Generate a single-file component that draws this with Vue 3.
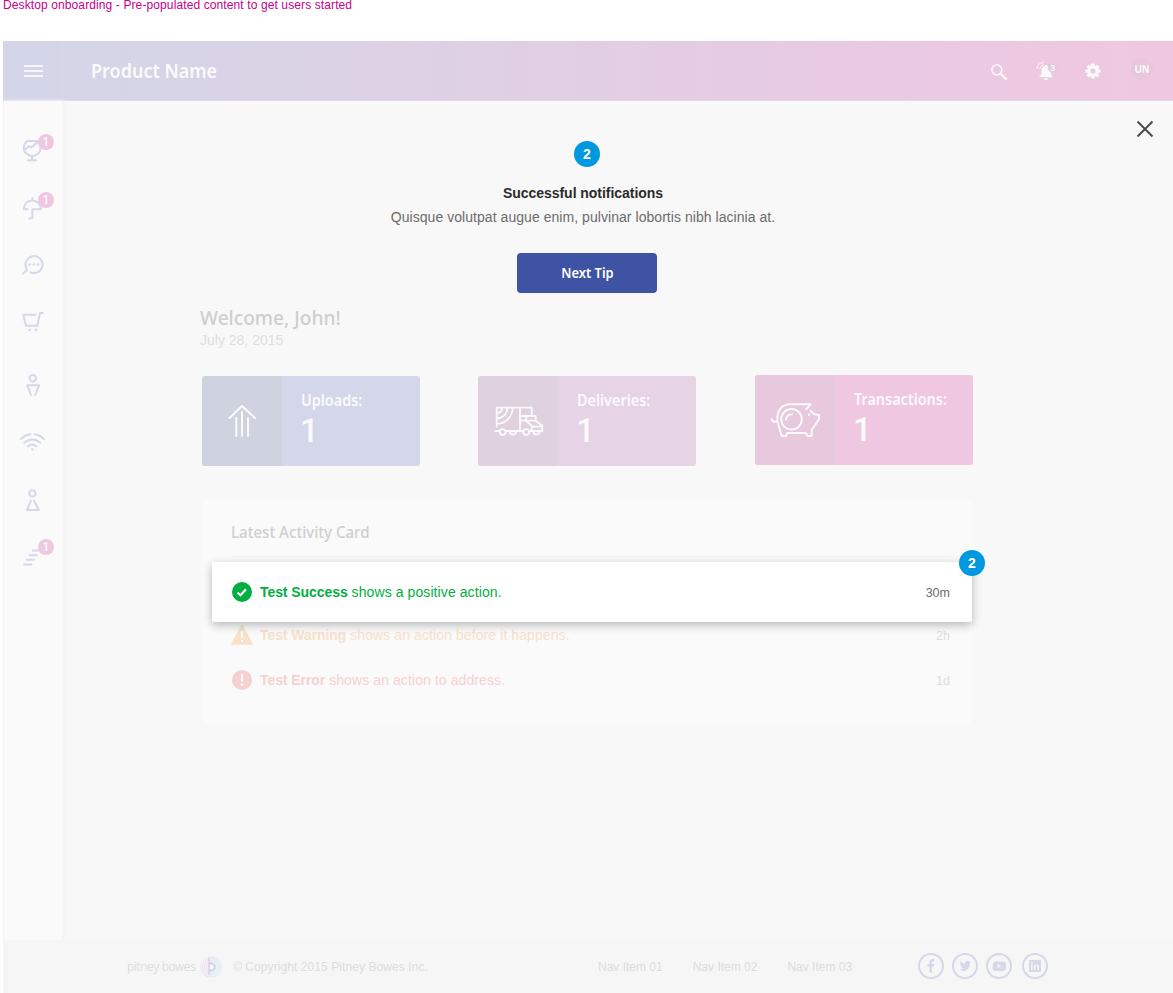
<script setup>
const navItems = [
  { id: 'reports', badge: 1, d: 'M38.500 21H27.500C22.500 24.500 22.700 31 27 34A8.300 8.300 0 0 0 40.500 26.500M32 36V40M28 40.300H36M25.500 29L29 26L31.500 27.500L38.500 21' },
  { id: 'insurance', badge: 1, d: 'M27.500 31.300H23.700C23.700 26 27.500 22.500 32.300 22.500S41 26 41 31.300H32.300V40.300H29M32.300 22.500V20' },
  { id: 'search', d: 'M30.500 36.300A8.500 8.500 0 1 0 26.500 32.500L27 34L23 37.500', dots: [[29.5, 28.5], [33.8, 28.5], [38, 28.5]] },
  { id: 'cart', d: 'M35.500 20.800H23.300L26 31.700H37.300L40 19H42.700', dots: [[29.500, 36], [36, 36]] },
  { id: 'person', d: 'M31 43L27.300 33.300H39L35.300 43', head: [32.800, 26.300] },
  { id: 'wifi', d: 'M20.800 29Q25 25 30.300 24.300M34.500 24.300Q40 25 43.800 29M24.300 32.700Q32.300 26 40.300 32.700M28 36.300Q32.300 32.700 36.600 36.300', dots: [[32.300, 39.500]] },
  { id: 'customer', d: 'M30.800 33L27 42H38.700L34.300 33', head: [32.400, 25.400] },
  { id: 'steps', badge: 1, d: 'M32.700 24.500H39M29.800 29.200H37M27 33.700H34M24 38.400H31.500' }
]
const stats = [
  { id: 'uploads', label: 'Uploads:', value: 1 },
  { id: 'deliveries', label: 'Deliveries:', value: 1 },
  { id: 'transactions', label: 'Transactions:', value: 1 }
]
const links = ['Nav Item 01', 'Nav Item 02', 'Nav Item 03']
const rings = [3, 4.800, 6.600, 8.400, 10.200]
</script>

<template>
  <div class="page">
    <div class="caption">Desktop onboarding - Pre-populated content to get users started</div>
    <div class="app">
      <header class="topbar">
        <div class="burger"><i></i><i></i><i></i></div>
        <div class="product">Product Name</div>
        <div class="tools">
          <svg class="line" width="18" height="18" viewBox="0 0 18 18"><circle cx="6.800" cy="6.800" r="5" /><path d="M10.500 10.500L16.500 16.500" stroke-width="2.200" /></svg>
          <svg class="bell" width="22" height="20" viewBox="0 0 22 20">
            <path d="M3.500 16.300H16.500V15.200L14.800 13.200V9.500C14.800 6.800 13 5.200 11.200 4.900V4H9V4.900C7 5.300 5.500 6.800 5.500 9.500V13.200L3.500 15.200ZM8 17.200A2 2 0 0 0 12 17.200Z" fill="#fafafa" />
            <path d="M1 7.500Q1.500 2 7.500 1.500M3.500 8Q4 4.800 7.800 3.900" fill="none" stroke="#fafafa" />
            <circle cx="16.500" cy="6.500" r="4.800" fill="#e7c8dd" />
            <text x="16.600" y="9.800" text-anchor="middle">3</text>
          </svg>
          <svg class="gear" width="16" height="16" viewBox="-8 -8 16 16">
            <g fill="#fafafa"><rect v-for="n in 4" :key="n" x="-1.700" y="-7.500" width="3.400" height="15" rx=".4" :transform="`rotate(${n * 45})`" /></g>
            <circle r="4.200" fill="none" stroke="#fafafa" stroke-width="3" /><circle r="2.600" fill="#edc8e0" />
          </svg>
          <div class="avatar">UN</div>
        </div>
      </header>

      <div class="body">
        <nav class="sidebar">
          <div v-for="item in navItems" :key="item.id" class="nav-item">
            <svg width="60" height="58" viewBox="3 0 60 58">
              <path :d="item.d" />
              <circle v-for="(p, i) in item.dots" :key="i" class="dot" :cx="p[0]" :cy="p[1]" r="1.300" />
              <circle v-if="item.head" :cx="item.head[0]" :cy="item.head[1]" r="3.200" />
            </svg>
            <span v-if="item.badge" class="nav-badge" :class="item.id">{{ item.badge }}</span>
          </div>
        </nav>

        <main class="main">
          <svg class="close" width="18" height="18" viewBox="0 0 18 18"><path d="M1.500 1.500L16.500 16.500M16.500 1.500L1.500 16.500" /></svg>
          <section class="tip">
            <div class="step">2</div>
            <h3>Successful notifications</h3>
            <p>Quisque volutpat augue enim, pulvinar lobortis nibh lacinia at.</p>
            <button><span>Next Tip</span></button>
          </section>

          <div class="content">
            <h1>Welcome, John!</h1>
            <div class="date">July 28, 2015</div>
            <div class="stats">
              <div v-for="s in stats" :key="s.id" class="stat" :class="s.id">
                <div class="pict">
                  <svg v-if="s.id === 'uploads'" width="80" height="90" viewBox="0 0 80 90"><path d="M27.500 42L40 30L53 42M40 36V60M34.300 42V60M46 42V60" /></svg>
                  <svg v-else-if="s.id === 'deliveries'" class="truck" width="80" height="90" viewBox="0 0 80 90">
                    <path d="M18.700 50.500V31.700H53.700V40M42 31.700V55M17 55H21.500M28 55H45M51 55H64.300V49.700L57.700 44.700V40H42M42 44.700H57.700M48 40V44.700L53.700 49.700V55M53.700 50.700H64M24.200 31.700A5.500 5.500 0 0 1 18.700 37.200M29.400 31.700A10.700 10.700 0 0 1 18.700 42.400M34.700 31.700A16 16 0 0 1 18.700 47.700M32 55.500A3 3 0 0 0 38 55.500M55.400 55.500A3 3 0 0 0 61.400 55.500" />
                    <circle cx="24.700" cy="56" r="2.900" /><circle cx="48.200" cy="56" r="2.900" />
                  </svg>
                  <svg v-else width="80" height="90" viewBox="0 0 80 90">
                    <path d="M16.700 44Q17 47.300 20 46.500H22.300C21.500 35 27 29.300 35.500 29.300H55.500L51 34.300M55.700 35.700C57 37.500 58.500 39.300 60.500 39.500L64 40V44.300L56.700 55V61H52.700L50.700 58H32.300L31 61H26.700L22.300 46" />
                    <circle cx="36.500" cy="44.300" r="10.300" /><path d="M31 44.500Q31.500 39.500 37 39.300" /><circle class="eye" cx="54" cy="39.800" r="1.200" />
                  </svg>
                </div>
                <div class="figures"><span class="label">{{ s.label }}</span><span class="value">{{ s.value }}</span></div>
              </div>
            </div>

            <section class="activity">
              <h2><span>Latest Activity Card</span></h2>
              <div class="row success">
                <svg width="22" height="22" viewBox="0 0 22 22"><circle cx="11" cy="11" r="10" /><path d="M6.500 11.500L9.500 14.300L15 8.300" class="mark" /></svg>
                <div class="msg"><b>Test Success</b> shows a positive action.</div><time>30m</time>
                <span class="step pin">2</span>
              </div>
              <div class="row warning">
                <svg width="22" height="22" viewBox="0 0 22 22"><path d="M11 .8Q11.600 .8 12 1.600L21.800 19.500Q22 20.700 21 20.700H1Q0 20.700 .2 19.500L10 1.600Q10.400 .8 11 .8Z" /><path d="M11 7V14M11 16V18" class="bang" /></svg>
                <div class="msg"><b>Test Warning</b> shows an action before it happens.</div><time>2h</time>
              </div>
              <div class="row error">
                <svg width="22" height="22" viewBox="0 0 22 22"><circle cx="11" cy="11" r="10" /><path d="M11 5V12.500M11 14.500V17" class="bang" /></svg>
                <div class="msg"><b>Test Error</b> shows an action to address.</div><time>1d</time>
              </div>
            </section>
          </div>
        </main>
      </div>

      <footer class="footer">
        <span class="brand">pitney bowes</span>
        <svg class="logo" width="24" height="24" viewBox="0 0 24 24">
          <defs><linearGradient id="ring" gradientUnits="userSpaceOnUse" x1="3" y1="3" x2="20" y2="20"><stop offset=".15" stop-color="#f2e0eb" /><stop offset=".5" stop-color="#e4e0f1" /><stop offset=".85" stop-color="#d3edf5" /></linearGradient></defs>
          <circle v-for="r in rings" :key="r" cx="12" cy="12" :r="r" fill="none" stroke="url(#ring)" stroke-width="1" />
          <path d="M10 3V8.500M10 20V8.500H12.500A3.500 3.500 0 0 1 12.500 15.500H10" fill="none" stroke="#d0d2e8" stroke-width="1.400" />
        </svg>
        <span class="copy">© Copyright 2015 Pitney Bowes Inc.</span>
        <div class="links"><span v-for="l in links" :key="l">{{ l }}</span></div>
        <div class="social">
          <svg width="26" height="26" viewBox="0 0 26 26"><circle cx="13" cy="13" r="12" /><path d="M11.500 19.500V13.500H9.500V11H11.500V9.500C11.500 7.200 12.600 6 14.700 6H16.200V8.500H15C14.200 8.500 14 8.900 14 9.600V11H16.200L15.900 13.500H14V19.500Z" /></svg>
          <svg width="26" height="26" viewBox="0 0 26 26"><circle cx="13" cy="13" r="12" /><path d="M8 16.300C9.500 16.400 10.600 16 11.400 15.400C10.200 15.300 9.400 14.600 9.100 13.600H10.100C8.900 13.200 8.200 12.200 8.200 11.100L9.200 11.400C8.200 10.500 7.900 9.300 8.500 8.300C9.800 9.800 11.300 10.600 13.200 10.700C12.800 8.900 14 7.800 15.400 7.800C16.200 7.800 16.800 8.100 17.200 8.600L18.700 8L17.700 9.400L19 9.100L17.900 10.400C18 15 14.500 18 11 18C9.900 18 8.800 17.600 8 16.300Z" /></svg>
          <svg width="26" height="26" viewBox="0 0 26 26"><circle cx="13" cy="13" r="12" /><path fill-rule="evenodd" d="M10 8.500H17Q19.800 8.500 19.800 11V15.500Q19.800 18 17 18H10Q6.800 18 6.800 15.500V11Q6.800 8.500 10 8.500ZM11.500 10.800V15L15.500 12.900Z" /></svg>
          <svg width="26" height="26" viewBox="0 0 26 26"><circle cx="13" cy="13" r="12" /><rect x="7" y="7" width="12" height="12" rx="1" /><path class="cut" d="M9 11.500H10.500V17H9ZM9 9H10.500V10.500H9ZM12 17V11.500H13.300V12.300C14.500 11 17 11.200 17 13.800V17H15.500V14C15.500 12.500 13.500 12.500 13.500 14V17Z" /></svg>
        </div>
      </footer>
    </div>
  </div>
</template>

<style>
body { background: #fff; overflow: hidden; }
</style>

<style scoped>
.page { height: 993px; font-family: "Liberation Sans", Arial, sans-serif; display: flex; flex-direction: column; box-sizing: border-box; padding-left: 3px; }
.caption { height: 41px; flex: none; font-size: 12px; line-height: 10px; color: #c5008b; letter-spacing: 0.11px; white-space: nowrap; }
.app { flex: 1; display: flex; flex-direction: column; background: #f8f8f8; }
.topbar { height: 60px; flex: none; display: flex; align-items: center; background: linear-gradient(90deg, #d2d6e8, #dfd0e4 40%, #e9cae2 75%, #f0c7e1); box-sizing: border-box; border-bottom: 1px solid #e3d8e8; }
.burger { width: 60px; height: 100%; box-sizing: border-box; border-right: 1px solid #d6d9ea; display: flex; flex-direction: column; gap: 3px; justify-content: center; padding-left: 21px; }
.burger i { width: 19px; height: 2px; background: #f5f5fa; }
.product { margin-left: 28px; font: 600 20px/60px "Noto Sans", sans-serif; color: #fafafa; transform: scaleX(.9); transform-origin: left; }
.tools { margin-left: auto; display: flex; align-items: center; padding-right: 20px; }
.line { fill: none; stroke: #fafafa; stroke-width: 1.600; margin: 2px -2px 0 0; }
.bell { margin-left: 29px; }
.bell text { font: bold 8.500px "Liberation Sans", sans-serif; fill: #fafafa; }
.gear { margin: 1px 0 0 28px; }
.avatar { margin: -3px 0 0 30px; width: 22px; height: 22px; border-radius: 50%; background: #e8c7dc; color: #fafafa; font: bold 10px/23px "Liberation Sans", sans-serif; text-align: center; }
.bell { transform: translateX(1px); }
.body { flex: 1; display: flex; min-height: 0; }
.sidebar { width: 60px; box-sizing: border-box; background: #fafafa; border-left: 1px solid #f5f5f5; border-right: 1px solid #f6f6f6; box-shadow: 1px 0 4px #f3f3f3; padding-top: 19px; }
.nav-item { position: relative; height: 58px; margin-left: -1px; }
.nav-item svg { display: block; fill: none; stroke: #d4d8e9; stroke-width: 2; stroke-linecap: round; stroke-linejoin: round; }
.nav-item .dot { fill: #d4d8e9; stroke: none; }
.nav-badge { position: absolute; left: 35px; top: 14px; width: 16px; height: 16px; border-radius: 50%; background: #f0c7e1; color: #fafafa; font: 500 12px/16px Roboto, sans-serif; text-align: center; }
.nav-badge.steps { top: 13px; }
.main { flex: 1; position: relative; }
.close { position: absolute; right: 19px; top: 19px; stroke: #4a4a4a; stroke-width: 1.900; }
.tip { display: flex; flex-direction: column; align-items: center; padding-top: 40px; width: 1048px; height: 202px; box-sizing: border-box; }
.step { width: 26px; height: 26px; border-radius: 50%; background: #0099e0; color: #fff; font: bold 14px/26px "Liberation Sans", sans-serif; text-align: center; flex: none; }
.tip h3 { margin: 16px 8px 0 0; font-size: 14px; line-height: 20px; color: #2b2b2b; letter-spacing: -0.04px; }
.tip p { margin: 4px 8px 0 0; font-size: 14px; line-height: 20px; color: #6c6c6c; letter-spacing: 0.05px; }
.tip button { margin-top: 26px; width: 140px; height: 40px; flex: none; border: 0; border-radius: 4px; background: #3e53a4; color: #fff; font: 600 14px/40px "Noto Sans", sans-serif; padding: 0; }
.tip button span { display: inline-block; transform: scaleX(.92); }
.content { margin-left: 139px; width: 771px; }
.content h1 { margin: 0 0 0 -2px; font: 500 20px/30px "Noto Sans", sans-serif; color: #cecece; transform: scaleX(.957); transform-origin: left; }
.date { margin: -1px 0 0 -2px; font-size: 14px; line-height: 16px; color: #dedede; height: 44px; }
.stats { display: flex; justify-content: space-between; height: 90px; }
.stat { width: 218px; height: 90px; display: flex; border-radius: 3px; overflow: hidden; color: #fafafa; }
.pict { width: 80px; background: #cfd3e0; }
.pict svg { display: block; fill: none; stroke: #fafafa; stroke-width: 2; stroke-linejoin: round; stroke-linecap: round; }
.pict .truck { stroke-width: 1.800; }
.pict .eye { fill: #fafafa; stroke: none; }
.uploads { background: #d4d7e9; }
.deliveries { background: #e6d4e6; margin-right: 1px; }
.deliveries .pict { background: #dfd1de; }
.transactions { background: #f0c7e1; margin-top: -1px; }
.transactions .pict { background: #e7c8dc; }
.figures { display: flex; flex-direction: column; padding-left: 19px; }
.label { font: 600 16px/24px "Noto Sans", sans-serif; margin-top: 12px; transform: scaleX(.9); transform-origin: left; }
.value { font: 500 33px/37px Roboto, sans-serif; margin-left: -1px; }
.activity { margin-top: 33px; height: 225px; border-radius: 4px; background: #fafafa; box-shadow: 0 0 2px #f3f3f3; width: 770px; }
.activity h2 { margin: 0 21px 5px 29px; height: 57px; font: 500 16px/67px "Noto Sans", sans-serif; color: #cfcfcf; border-bottom: 1px solid #f5f5f5; }
.activity h2 span { display: inline-block; transform: scaleX(.942); transform-origin: left; }
.row { position: relative; display: flex; align-items: center; font-size: 14px; height: 45px; padding: 0 22px 0 29px; }
.row svg { flex: none; }
.row .msg { margin-left: 7px; letter-spacing: 0.09px; }
.row b { letter-spacing: -0.07px; }
.row time { margin-left: auto; padding-top: 2px; font-size: 12.500px; color: #dcdcdc; }
.success { height: 60px; margin-left: 10px; padding-left: 19px; background: #fff; border-radius: 2px; box-shadow: 0 3px 10px rgba(0, 0, 0, .27); color: #00ae42; fill: #00ae42; z-index: 1; }
.success time { color: #6b6b6b; }
.warning { color: #f8e1c9; fill: #f8e1c9; margin-top: -10px; }
.error { color: #f7d1d1; fill: #f7d1d1; }
.mark { fill: none; stroke: #fff; stroke-width: 2.200; }
.bang { fill: none; stroke: #fafafa; stroke-width: 2; }
.pin { position: absolute; right: -13px; top: -12px; }
.footer { height: 53px; flex: none; display: flex; align-items: center; background: #f6f6f6; color: #dcdcdc; font-size: 12px; white-space: nowrap; }
.brand { margin-left: 124px; width: 70px; font: 300 12px/20px "Open Sans", sans-serif; color: #cfcfcf; letter-spacing: -0.22px; }
.logo { margin-left: 2px; }
.copy { margin-left: 10px; width: 365px; letter-spacing: 0.08px; }
.links { display: flex; gap: 30px; width: 320px; }
.social { display: flex; gap: 8px; margin-top: -2px; }
.social svg { fill: #d4d8e9; }
.social circle { fill: none; stroke: #d4d8e9; stroke-width: 2; }
.social svg:last-child { margin-left: 2px; }
.social .cut { fill: #f6f6f6; }
</style>
